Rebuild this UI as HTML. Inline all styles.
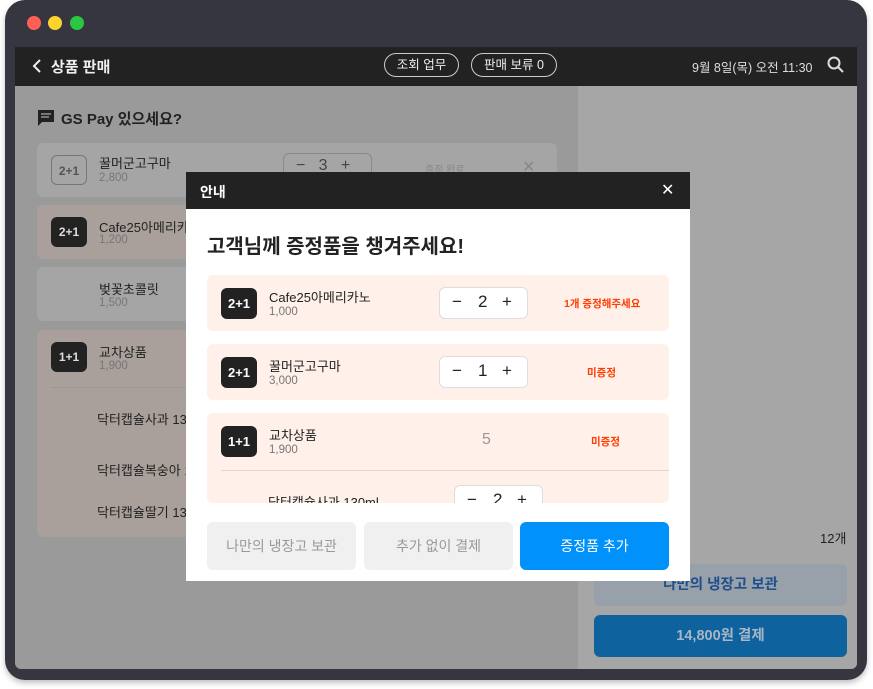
<!DOCTYPE html><html><head><meta charset="utf-8"><style>
*{box-sizing:border-box;margin:0;padding:0}
body{width:873px;height:689px;background:#fff;font-family:"Liberation Sans","Noto Sans CJK KR",sans-serif;position:relative;overflow:hidden;color:#222}
.a{position:absolute}
.dev{left:5px;top:0;width:862px;height:680px;background:#363640;border-radius:20px;box-shadow:0 3px 6px rgba(0,0,0,.25)}
.dot{width:14px;height:14px;border-radius:50%;top:16px}
.scr{left:15px;top:47px;width:842px;height:622px;background:#9a9a9a;overflow:hidden;border-radius:0 0 6px 6px}
.bar{left:0;top:0;width:842px;height:39px;background:#222}
.pill{top:6px;height:24px;border:1px solid #ccc;border-radius:12px;color:#eee;font-size:12.5px;line-height:22px;text-align:center}
.card{left:22px;width:520px;border-radius:6px}
.bd{width:36px;height:30px;border-radius:6px;font-size:12px;font-weight:bold;text-align:center;line-height:30px}
.nm{font-size:13px;color:#222}
.pr{font-size:11.5px;color:#777}
.mc{left:21px;width:462px;background:#fff0ea;border-radius:6px}
.mb{left:14px;top:13px;width:36px;height:31px;background:#222;color:#fff;border-radius:6px;font-size:13px;font-weight:bold;line-height:31px;text-align:center}
.stp{width:89px;height:32px;background:#fff;border:1px solid #ddd;border-radius:6px;font-size:17px;color:#222}
.stp span{position:absolute;top:4px}
.red{color:#ff3d00;font-size:10.5px;font-weight:bold}
.btn{top:350px;width:149px;height:48px;border-radius:6px;font-size:14px;text-align:center;line-height:48px}
</style></head><body>
<div class="a dev"></div>
<div class="a dot" style="left:27px;background:#fe5f57"></div>
<div class="a dot" style="left:48px;background:#fcd42d"></div>
<div class="a dot" style="left:70px;background:#2ac840"></div>
<div class="a scr">
 <div class="a bar">
  <svg class="a" style="left:17px;top:11px" width="10" height="16"><path d="M8 2L2 8l6 6" stroke="#eee" stroke-width="2" fill="none"/></svg>
  <div class="a" style="left:36px;top:9px;color:#eee;font-size:15px;font-weight:bold">상품 판매</div>
  <div class="a pill" style="left:369px;width:75px">조회 업무</div>
  <div class="a pill" style="left:456px;width:86px">판매 보류 0</div>
  <div class="a" style="left:677px;top:10px;color:#ddd;font-size:12.5px">9월 8일(목) 오전 11:30</div>
  <svg class="a" style="left:812px;top:9px" width="18" height="18"><circle cx="7" cy="7" r="5.5" stroke="#ddd" stroke-width="2" fill="none"/><path d="M11 11l5 5" stroke="#ddd" stroke-width="2"/></svg>
 </div>
 <div class="a" style="left:563px;top:39px;width:279px;height:583px;background:#a6a6a6"></div>
 <svg class="a" style="left:22px;top:62px" width="18" height="18"><path d="M1 1h16v12H5l-4 4z" fill="#222"/><path d="M4 5h10M4 8h8" stroke="#aaa" stroke-width="1.3"/></svg>
 <div class="a" style="left:46px;top:61px;font-size:15px;font-weight:bold">GS Pay 있으세요?</div>
 <div class="a card" style="top:96px;height:54px;background:#a5a5a5">
  <div class="a bd" style="left:14px;top:12px;border:1px solid #777;color:#555">2+1</div>
  <div class="a nm" style="left:62px;top:10px">꿀머군고구마</div><div class="a pr" style="left:62px;top:29px">2,800</div>
  <div class="a" style="left:246px;top:10px;width:89px;height:30px;border:1px solid #8a8a8a;border-radius:6px;font-size:16px;color:#444"><span class="a" style="left:12px;top:3px">−&nbsp;&nbsp;&nbsp;3&nbsp;&nbsp;&nbsp;+</span></div>
  <div class="a" style="left:388px;top:18px;font-size:10px;color:#888">증정 완료</div>
  <div class="a" style="left:485px;top:14px;color:#888">✕</div>
 </div>
 <div class="a card" style="top:158px;height:54px;background:#a99f9b">
  <div class="a bd" style="left:14px;top:12px;background:#222;color:#ddd">2+1</div>
  <div class="a nm" style="left:62px;top:12px">Cafe25아메리카노</div><div class="a pr" style="left:62px;top:29px">1,200</div>
 </div>
 <div class="a card" style="top:220px;height:54px;background:#a5a5a5">
  <div class="a nm" style="left:62px;top:12px">벚꽃초콜릿</div><div class="a pr" style="left:62px;top:30px">1,500</div>
 </div>
 <div class="a card" style="top:283px;height:207px;background:#a99f9b">
  <div class="a bd" style="left:14px;top:12px;background:#222;color:#ddd">1+1</div>
  <div class="a nm" style="left:62px;top:12px">교차상품</div><div class="a pr" style="left:62px;top:30px">1,900</div>
  <div class="a" style="left:14px;top:57px;width:506px;height:1px;background:#999"></div>
  <div class="a nm" style="left:60px;top:79px">닥터캡슐사과 130ml</div>
  <div class="a nm" style="left:60px;top:130px">닥터캡슐복숭아 130ml</div>
  <div class="a nm" style="left:60px;top:172px">닥터캡슐딸기 130ml</div>
 </div>
 <div class="a" style="left:805px;top:481px;font-size:13px">12개</div>
 <div class="a" style="left:579px;top:517px;width:253px;height:42px;background:#98a0aa;border-radius:6px;color:#1d4f8c;font-size:14.5px;font-weight:bold;text-align:center;line-height:42px">나만의 냉장고 보관</div>
 <div class="a" style="left:579px;top:568px;width:253px;height:42px;background:#0e629e;border-radius:6px;color:#a6b6c6;font-size:14.5px;font-weight:bold;text-align:center;line-height:42px">14,800원 결제</div>
</div>
<div class="a" style="left:186px;top:172px;width:504px;height:409px;background:#fff">
 <div class="a" style="left:0;top:0;width:504px;height:37px;background:#222"></div>
 <div class="a" style="left:14px;top:10px;color:#fff;font-size:14px;font-weight:bold">안내</div>
 <div class="a" style="left:475px;top:8px;color:#fff;font-size:16px">✕</div>
 <div class="a" style="left:21px;top:58px;font-size:20px;font-weight:bold">고객님께 증정품을 챙겨주세요!</div>
 <div class="a mc" style="top:103px;height:56px">
  <div class="a mb">2+1</div>
  <div class="a nm" style="left:62px;top:12px">Cafe25아메리카노</div><div class="a pr" style="left:62px;top:31px">1,000</div>
  <div class="a stp" style="left:232px;top:12px"><span style="left:12px">−</span><span style="left:38px">2</span><span style="left:62px">+</span></div>
  <div class="a red" style="left:357px;top:21px">1개 증정해주세요</div>
 </div>
 <div class="a mc" style="top:172px;height:56px">
  <div class="a mb">2+1</div>
  <div class="a nm" style="left:62px;top:12px">꿀머군고구마</div><div class="a pr" style="left:62px;top:31px">3,000</div>
  <div class="a stp" style="left:232px;top:12px"><span style="left:12px">−</span><span style="left:38px">1</span><span style="left:62px">+</span></div>
  <div class="a red" style="left:380px;top:21px">미증정</div>
 </div>
 <div class="a mc" style="top:241px;height:90px;overflow:hidden">
  <div class="a mb">1+1</div>
  <div class="a nm" style="left:62px;top:12px">교차상품</div><div class="a pr" style="left:62px;top:31px">1,900</div>
  <div class="a" style="left:275px;top:18px;font-size:16px;color:#999">5</div>
  <div class="a red" style="left:384px;top:21px">미증정</div>
  <div class="a" style="left:14px;top:57px;width:448px;height:1px;background:#e8d5cc"></div>
  <div class="a nm" style="left:61px;top:79px">닥터캡슐사과 130ml</div>
  <div class="a stp" style="left:247px;top:72px"><span style="left:12px">−</span><span style="left:38px">2</span><span style="left:62px">+</span></div>
 </div>
 <div class="a btn" style="left:21px;background:#f0f0f0;color:#999">나만의 냉장고 보관</div>
 <div class="a btn" style="left:178px;background:#f0f0f0;color:#999">추가 없이 결제</div>
 <div class="a btn" style="left:334px;background:#0091fa;color:#fff">증정품 추가</div>
</div>
</body></html>
